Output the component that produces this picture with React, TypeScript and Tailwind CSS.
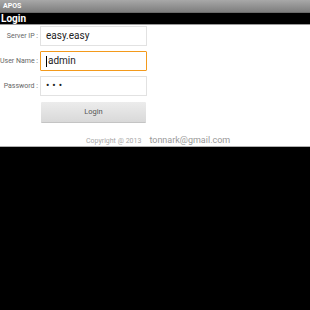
const ROWS = [
  { label: 'Server IP :', value: 'easy.easy', focused: false, secret: false },
  { label: 'User Name :', value: 'admin', focused: true, secret: false },
  { label: 'Password :', value: '•••', focused: false, secret: true },
];

export default function App() {
  return (
    <div className="flex h-[310px] w-[310px] flex-col bg-black font-['Roboto','Liberation_Sans',sans-serif]">
      <div className="flex h-[13px] items-center border-b border-[#6a6a6a] bg-gradient-to-b from-[#a8a8a8] to-[#7e7e7e] pl-[3px]">
        <span className="text-[7px] font-bold leading-none text-white">APOS</span>
      </div>
      <div className="flex h-[12px] items-center border-b border-[#9a9a9a] bg-black pl-[1px]">
        <span className="text-[10px] font-bold leading-none text-white">Login</span>
      </div>
      <div className="flex h-[121px] flex-col bg-white pt-[1px]">
        <div className="flex flex-col gap-[5px]">
          {ROWS.map((r) => (
            <div key={r.label} className="flex items-center">
              <span className="w-[40px] whitespace-nowrap pr-[2px] text-right text-[7px] text-[#666]">{r.label}</span>
              <div
                className={`flex h-[20px] w-[107px] items-center pl-[5px] ${
                  r.focused
                    ? 'rounded-[1px] border-[1.5px] border-[#f39a1c]'
                    : 'border border-[#e2e2e2]'
                }`}
              >
                {r.focused && <span className="mr-[1px] h-[11px] w-[1px] bg-black" />}
                <span
                  className={`leading-none text-[#222] ${
                    r.secret ? 'text-[10px] tracking-[3px]' : 'text-[10px]'
                  }`}
                >
                  {r.value}
                </span>
              </div>
            </div>
          ))}
        </div>
        <div className="mt-[6px] pl-[41px]">
          <div className="flex h-[21px] w-[105px] items-center justify-center rounded-[1px] border-b border-[#c4c4c4] bg-gradient-to-b from-[#ececec] to-[#d9d9d9]">
            <span className="text-[7.5px] text-[#555]">Login</span>
          </div>
        </div>
        <div className="mt-[11px] flex items-center pl-[86px]">
          <span className="text-[7px] text-[#a8a8a8]">Copyright @ 2013</span>
          <span className="ml-[8px] text-[9px] text-[#999]">tonnark@gmail.com</span>
        </div>
      </div>
      <div className="h-[1px] bg-[#b0b0b0]" />
    </div>
  );
}
